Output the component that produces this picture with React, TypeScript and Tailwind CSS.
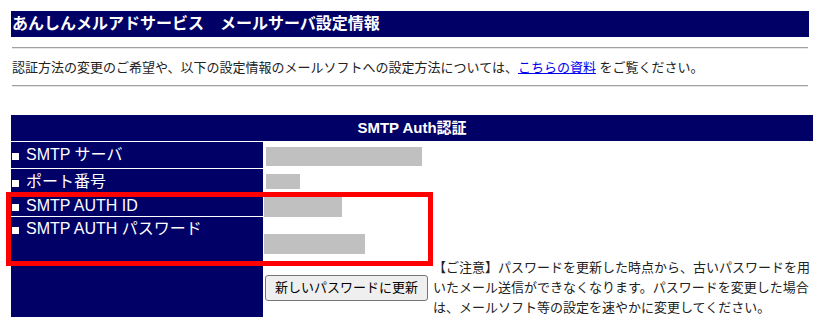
// メールサーバ設定情報ページ
import React from 'react';

const NAVY = 'bg-[#000066]';

function Label({ children, top }: { children: React.ReactNode; top?: boolean }) {
  return (
    <div
      className={`${NAVY} text-white text-[16px] pl-px flex ${
        top ? 'items-start leading-[24px]' : 'items-center leading-[20px]'
      } whitespace-nowrap`}
    >
      <span>
        <span className="inline-block w-[7px] h-[7px] bg-white mr-[7px]" />
        {children}
      </span>
    </div>
  );
}

export default function App() {
  return (
    <div className="relative w-[820px] h-[327px] overflow-hidden bg-white px-[11px] pt-[11px] font-['Liberation_Sans','Noto_Sans_CJK_JP',sans-serif] text-[#222]">
      {/* タイトル */}
      <div className={`${NAVY} h-[26px] pl-px text-white font-bold text-[16px] leading-[26px] whitespace-nowrap`}>
        あんしんメルアドサービス　メールサーバ設定情報
      </div>

      <div className="mt-[10px] mx-px border-t border-b border-t-[#a0a0a0] border-b-[#e6e6e6]" />

      {/* 説明 */}
      <p className="mt-[9px] pl-px text-[13px] leading-[20px] whitespace-nowrap">
        認証方法の変更のご希望や、以下の設定情報のメールソフトへの設定方法については、
        <a href="#" className="text-[#0000ee] underline">
          こちらの資料
        </a>{' '}
        をご覧ください。
      </p>

      <div className="mt-[7px] mx-px border-t border-b border-t-[#a0a0a0] border-b-[#e6e6e6]" />

      {/* SMTP Auth テーブル */}
      <div className="mt-[28px] grid grid-cols-[252px_1fr] grid-rows-[26px_26px_26px_20px_44px_55px] gap-px">
        <div className={`${NAVY} col-span-2 flex items-center justify-center text-white font-bold text-[15px]`}>
          SMTP Auth認証
        </div>

        <Label>SMTP サーバ</Label>
        <div className="pl-[2px] pt-[5px]">
          <div className="w-[156px] h-[19px] bg-[#c0c0c0]" />
        </div>

        <Label>ポート番号</Label>
        <div className="pl-[2px] pt-[5px]">
          <div className="w-[34px] h-[15px] bg-[#c0c0c0]" />
        </div>

        <Label>SMTP AUTH ID</Label>
        <div className="pt-px">
          <div className="w-[78px] h-[20px] bg-[#c0c0c0]" />
        </div>

        <Label top>SMTP AUTH パスワード</Label>
        <div className="row-span-2">
          <div className="mt-[17px] w-[101px] h-[20px] bg-[#c0c0c0]" />
          <div className="mt-[4px] flex items-center">
            <button className="ml-px h-[26px] w-[163px] shrink-0 rounded-[3px] border border-[#767676] bg-[#efefef] text-[13px] text-black">
              新しいパスワードに更新
            </button>
            <p className="ml-[5px] w-[380px] shrink-0 text-[13px] leading-[20px]">
              【ご注意】パスワードを更新した時点から、古いパスワードを用いたメール送信ができなくなります。パスワードを変更した場合は、メールソフト等の設定を速やかに変更してください。
            </p>
          </div>
        </div>

        <div className={NAVY} />
      </div>

      {/* 赤枠 */}
      <div className="absolute left-[6px] top-[192px] w-[427px] h-[74px] border-[5px] border-[#ff0000] pointer-events-none" />
    </div>
  );
}
